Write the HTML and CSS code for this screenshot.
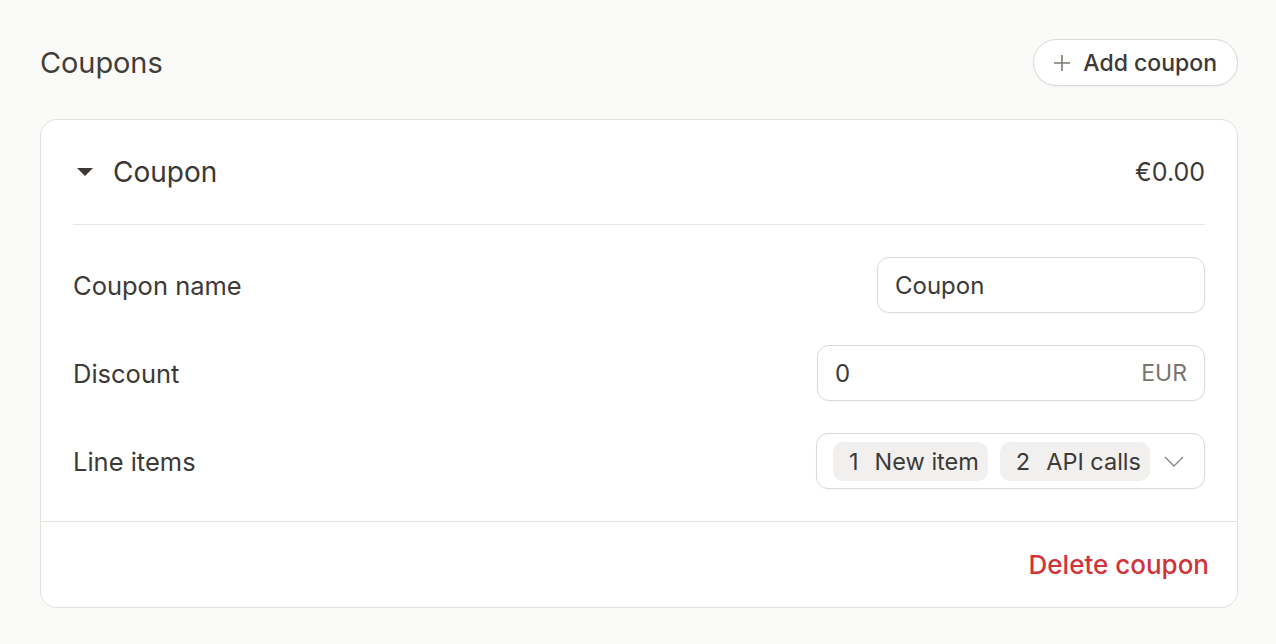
FILE: index.html
```html
<!DOCTYPE html>
<html lang="en">
<head>
<meta charset="utf-8">
<title>Coupons</title>
<link rel="stylesheet" href="styles.css">
</head>
<body>
<main class="page">
  <header class="top">
    <h1 class="title">Coupons</h1>
    <button class="add-btn" type="button">
      <svg class="plus" width="18" height="18" viewBox="0 0 18 18" aria-hidden="true"><path d="M9 1v16M1 9h16" stroke="#7d7873" stroke-width="1.6" fill="none"/></svg>
      <span>Add coupon</span>
    </button>
  </header>

  <section class="card">
    <div class="card-head">
      <div class="head-left">
        <svg class="caret" width="16" height="8" viewBox="0 0 16 8" aria-hidden="true"><path d="M0 0h16L8 8z" fill="#3d3936"/></svg>
        <span class="head-title">Coupon</span>
      </div>
      <span class="head-amount">€0.00</span>
    </div>

    <div class="card-body">
      <div class="row">
        <span class="label">Coupon name</span>
        <div class="field field-name"><span class="value">Coupon</span></div>
      </div>
      <div class="row">
        <span class="label">Discount</span>
        <div class="field field-discount"><span class="value">0</span><span class="unit">EUR</span></div>
      </div>
      <div class="row">
        <span class="label">Line items</span>
        <div class="field field-select">
          <span class="chip"><span class="num">1</span>New item</span>
          <span class="chip"><span class="num">2</span>API calls</span>
          <svg class="chev" width="20" height="11" viewBox="0 0 20 11" aria-hidden="true"><path d="M1 1l9 9 9-9" stroke="#8a8580" stroke-width="1.4" fill="none"/></svg>
        </div>
      </div>
    </div>

    <div class="card-foot">
      <button class="delete" type="button">Delete coupon</button>
    </div>
  </section>
</main>
</body>
</html>
```

FILE: styles.css
```css
* { box-sizing: border-box; }

html, body {
  margin: 0;
  background: #fafaf9;
  font-family: Inter, "Noto Sans", sans-serif;
  color: #3d3936;
}

.page {
  padding: 39px 38px 0 40px;
}

.top {
  display: flex;
  justify-content: space-between;
  align-items: center;
  height: 47px;
}

.title {
  margin: 0;
  font-size: 29px;
  font-weight: 400;
  color: #423e3b;
  letter-spacing: -0.1px;
}

.add-btn {
  display: flex;
  align-items: center;
  gap: 12px;
  height: 47px;
  padding: 0 20px 0 19px;
  border: 1px solid #dcdad7;
  border-radius: 24px;
  background: #fff;
  box-shadow: 0 1px 2px rgba(0,0,0,0.05);
  font-family: inherit;
  font-size: 23px;
  font-weight: 500;
  color: #3d3936;
}

.card {
  margin-top: 33px;
  background: #fff;
  border: 1px solid #e3e1de;
  border-radius: 17px;
}

.card-head {
  margin: 0 32px;
  padding: 32px 0;
  height: 105px;
  display: flex;
  justify-content: space-between;
  align-items: center;
  border-bottom: 1px solid #e8e6e3;
}

.head-left {
  display: flex;
  align-items: center;
  gap: 20px;
  padding-left: 4px;
}

.head-title {
  font-size: 28px;
  font-weight: 400;
  color: #3b3734;
}

.head-amount {
  font-size: 25px;
  font-weight: 400;
}

.card-body {
  padding: 32px 32px;
  display: flex;
  flex-direction: column;
  gap: 32px;
  border-bottom: 1px solid #e3e1de;
}

.row {
  display: flex;
  justify-content: space-between;
  align-items: center;
  height: 56px;
}

.label {
  font-size: 25.5px;
  font-weight: 400;
  color: #3d3936;
}

.field {
  height: 56px;
  border: 1px solid #dcdad7;
  border-radius: 12px;
  background: #fff;
  display: flex;
  align-items: center;
  box-shadow: 0 1px 2px rgba(0,0,0,0.03);
}

.value {
  font-size: 24px;
  color: #3d3936;
}

.field-name {
  width: 328px;
  padding: 0 17px;
}

.field-discount {
  width: 388px;
  padding: 0 17px;
  justify-content: space-between;
}

.unit {
  font-size: 23px;
  color: #7a7571;
}

.field-select {
  width: 389px;
  padding: 0 20px 0 16px;
  gap: 12px;
}

.chip {
  display: inline-flex;
  align-items: center;
  height: 39px;
  padding: 0 9px 0 16px;
  background: #f1f0ee;
  border-radius: 10px;
  font-size: 23.5px;
  font-weight: 400;
  color: #3d3936;
}

.num {
  display: inline-block;
  margin-right: 16px;
}

.chev {
  margin-left: auto;
}

.card-foot {
  height: 85px;
  display: flex;
  justify-content: flex-end;
  align-items: center;
  padding: 0 28px;
}

.delete {
  border: 0;
  background: none;
  padding: 0;
  font-family: inherit;
  font-size: 26px;
  font-weight: 500;
  color: #d0343a;
}
```
